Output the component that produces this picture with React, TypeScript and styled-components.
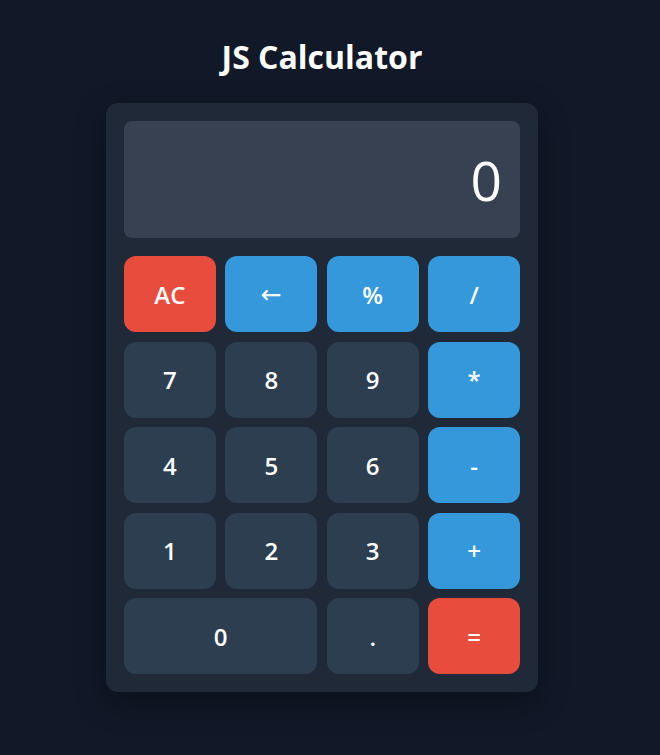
import React, { useState } from "react";
import styled, { createGlobalStyle } from "styled-components";

const Global = createGlobalStyle`
  html, body { margin: 0; padding: 0; background: #111827; }
  body { font-family: "Open Sans", "Noto Sans", sans-serif; color: #fff; }
  * { box-sizing: border-box; }
`;

const Page = styled.div`
  width: 644px;
  min-height: 755px;
  display: flex;
  flex-direction: column;
  align-items: center;
  padding-top: 36px;
`;

const Title = styled.h1`
  margin: 0 0 25px;
  font-size: 32px;
  line-height: 42px;
  font-weight: 700;
  color: #fff;
`;

const Card = styled.div`
  width: 432px;
  background: #1f2937;
  border-radius: 12px;
  padding: 18px;
  box-shadow: 0 10px 30px rgba(0, 0, 0, 0.35);
`;

const Display = styled.div`
  height: 117px;
  background: #374151;
  border-radius: 8px;
  display: flex;
  align-items: center;
  justify-content: flex-end;
  padding: 0 18px;
  font-size: 55px;
  font-weight: 400;
  color: #fff;
  margin-bottom: 18px;
`;

const Grid = styled.div`
  display: grid;
  grid-template-columns: repeat(4, 1fr);
  grid-auto-rows: 76px;
  gap: 9.6px;
`;

type Variant = "num" | "op" | "danger";

const Key = styled.button<{ $variant: Variant; $span?: number; $symbol?: boolean }>`
  border: none;
  border-radius: 12px;
  font-family: ${(p) => (p.$symbol ? '"DejaVu Sans", sans-serif' : "inherit")};
  font-size: ${(p) => (p.$symbol ? "25px" : "24px")};
  font-weight: ${(p) => (p.$symbol ? 400 : 600)};
  color: #fff;
  cursor: pointer;
  padding: 0;
  grid-column: span ${(p) => p.$span ?? 1};
  background: ${(p) =>
    p.$variant === "danger" ? "#e74c3c" : p.$variant === "op" ? "#3498db" : "#2c3e50"};
`;

const keys: { label: string; v: Variant; span?: number; symbol?: boolean }[] = [
  { label: "AC", v: "danger" },
  { label: "←", v: "op", symbol: true },
  { label: "%", v: "op" },
  { label: "/", v: "op" },
  { label: "7", v: "num" },
  { label: "8", v: "num" },
  { label: "9", v: "num" },
  { label: "*", v: "op" },
  { label: "4", v: "num" },
  { label: "5", v: "num" },
  { label: "6", v: "num" },
  { label: "-", v: "op" },
  { label: "1", v: "num" },
  { label: "2", v: "num" },
  { label: "3", v: "num" },
  { label: "+", v: "op" },
  { label: "0", v: "num", span: 2 },
  { label: ".", v: "num" },
  { label: "=", v: "danger" },
];

export default function App() {
  const [value] = useState("0");
  return (
    <>
      <Global />
      <Page>
        <Title>JS Calculator</Title>
        <Card>
          <Display>{value}</Display>
          <Grid>
            {keys.map((k) => (
              <Key key={k.label} $variant={k.v} $span={k.span} $symbol={k.symbol}>
                {k.label}
              </Key>
            ))}
          </Grid>
        </Card>
      </Page>
    </>
  );
}
